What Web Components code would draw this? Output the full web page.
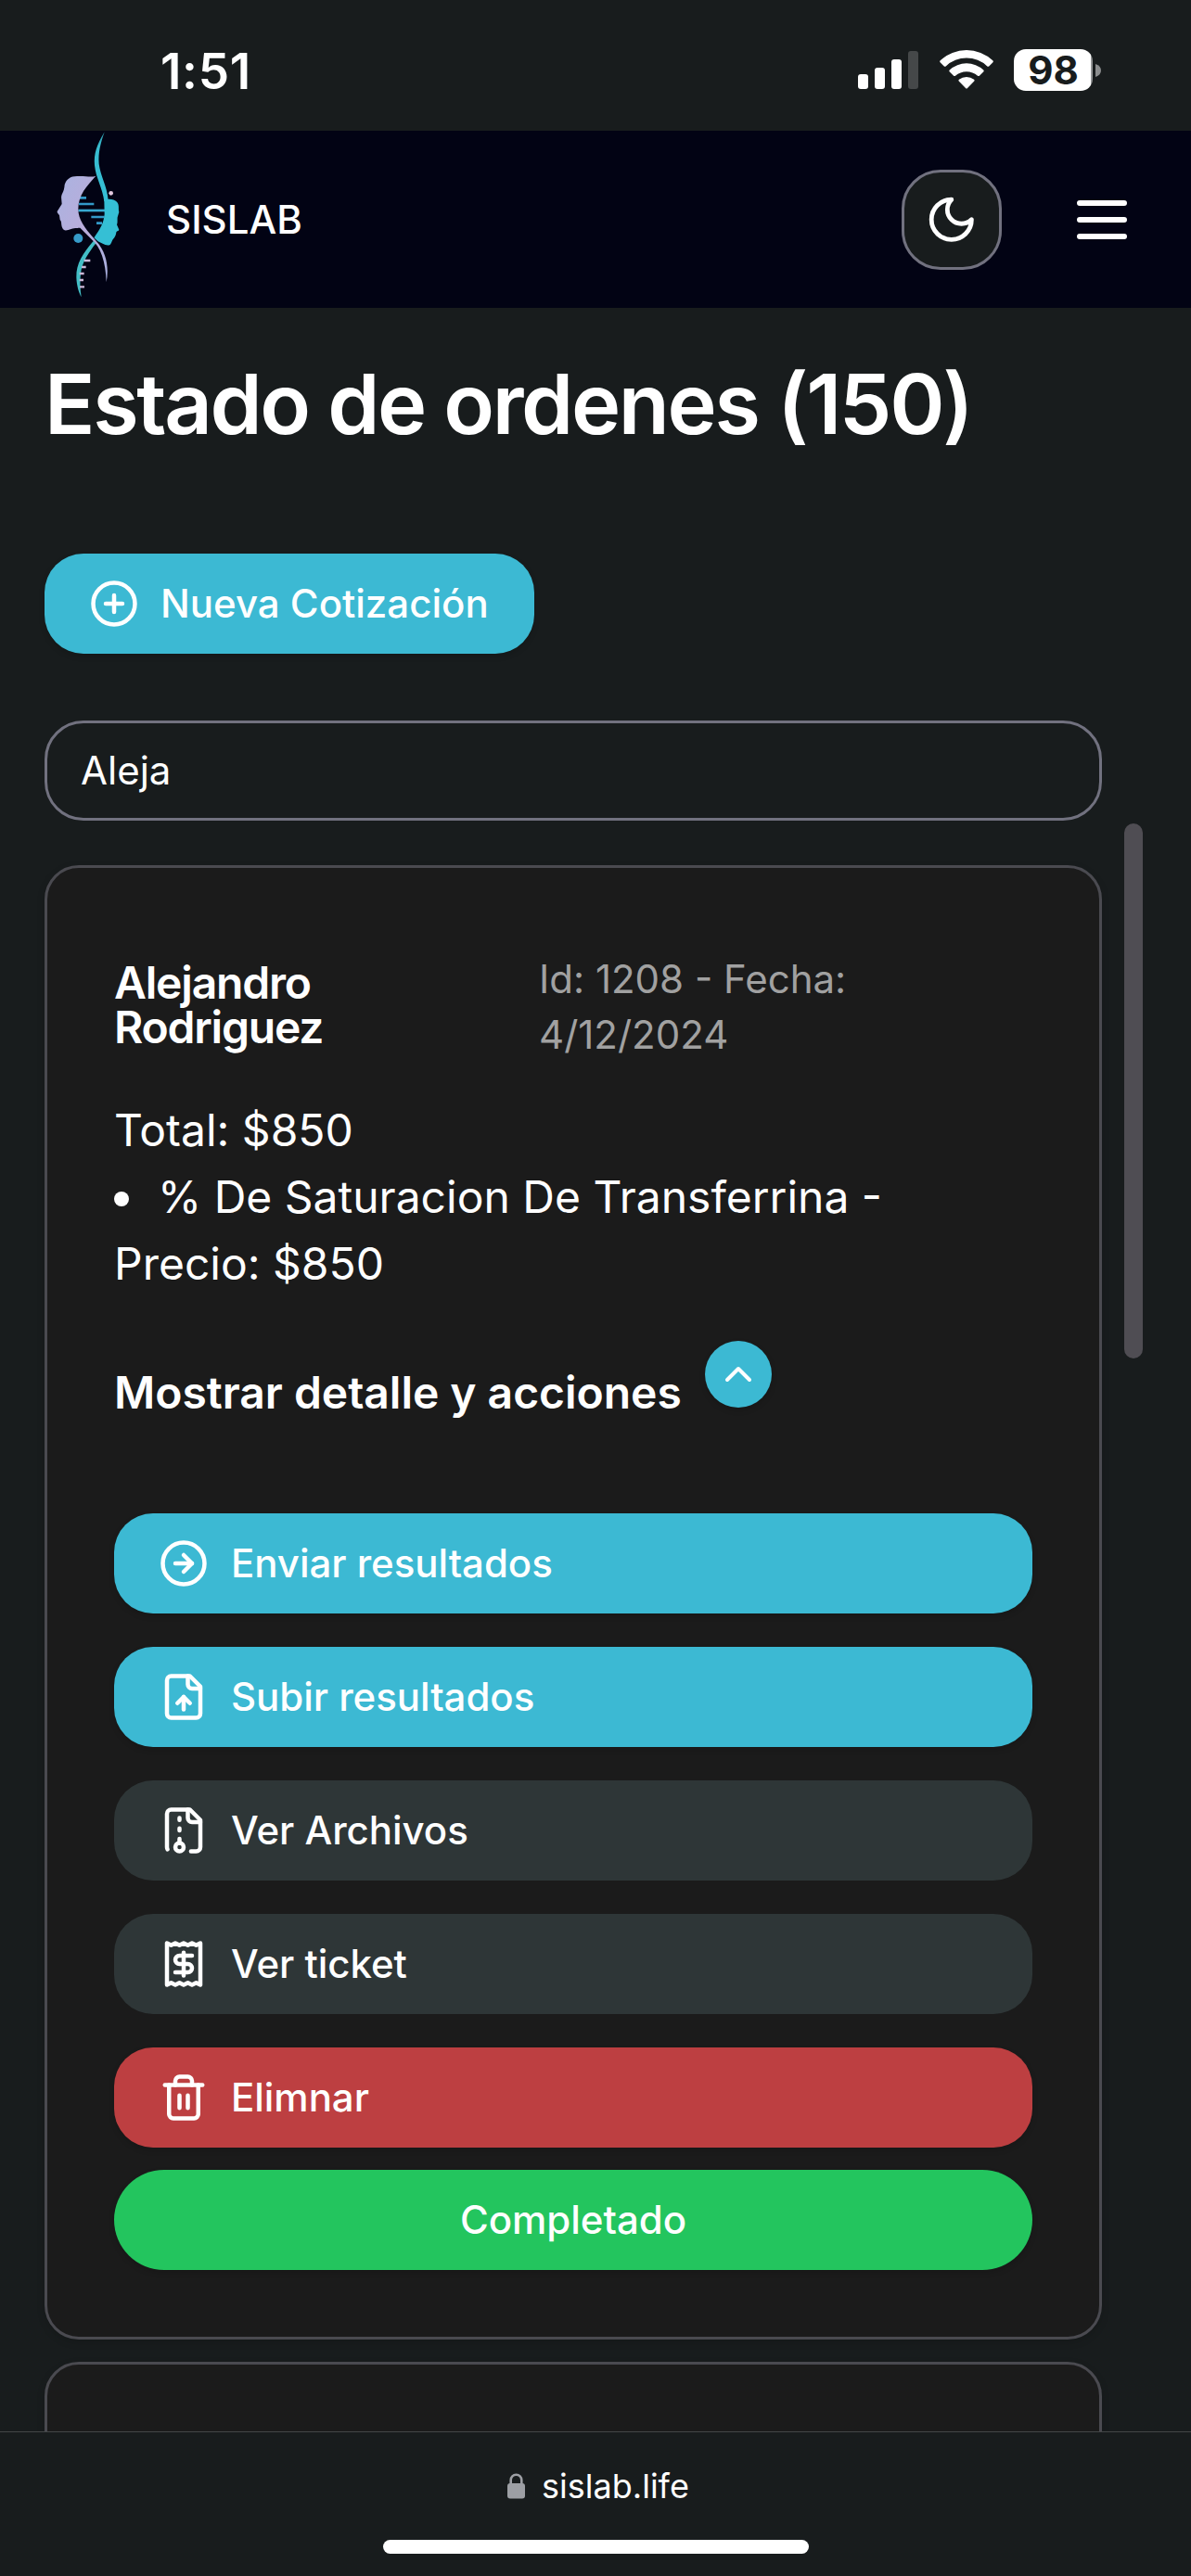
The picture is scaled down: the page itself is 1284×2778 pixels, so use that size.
<!DOCTYPE html>
<html lang="es">
<head>
<meta charset="utf-8">
<title>SISLAB</title>
<style>
html,body{margin:0;background:#181c1d}
body{width:1284px;height:2778px;overflow:hidden;font-family:Inter,"Liberation Sans",sans-serif;color:#fff}
</style>
</head>
<body>
<sis-screen>
  <sis-status slot="status"></sis-status>
  <sis-navbar slot="nav">SISLAB</sis-navbar>
  <sis-page slot="page">
    <span slot="title">Estado de ordenes (150)</span>
    <sis-button slot="new" icon="plus" compact>Nueva Cotización</sis-button>
    <sis-input slot="search" value="Aleja"></sis-input>
    <sis-card>
      <sis-order name="Alejandro Rodriguez" meta="Id: 1208 - Fecha: 4/12/2024" total="Total: $850" item="% De Saturacion De Transferrina - Precio: $850"></sis-order>
      <sis-button icon="send">Enviar resultados</sis-button>
      <sis-button icon="upload">Subir resultados</sis-button>
      <sis-button icon="archive" tone="muted">Ver Archivos</sis-button>
      <sis-button icon="receipt" tone="muted">Ver ticket</sis-button>
      <sis-button icon="trash" tone="danger">Elimnar</sis-button>
      <sis-button tone="done">Completado</sis-button>
    </sis-card>
    <sis-card></sis-card>
  </sis-page>
  <sis-urlbar slot="url">sislab.life</sis-urlbar>
</sis-screen>
<script>
const define=(name,render)=>customElements.define(name,class extends HTMLElement{
  constructor(){super();this.attachShadow({mode:'open'})}
  connectedCallback(){this.shadowRoot.innerHTML=render(this)}
});

const ICONS={
  plus:'<circle cx="12" cy="12" r="10"/><path d="M8 12h8M12 8v8"/>',
  send:'<circle cx="12" cy="12" r="10"/><path d="M8 12h8"/><path d="m12 16 4-4-4-4"/>',
  upload:'<path d="M15 2H6a2 2 0 0 0-2 2v16a2 2 0 0 0 2 2h12a2 2 0 0 0 2-2V7Z"/><path d="M14 2v4a2 2 0 0 0 2 2h4"/><path d="M12 12v6"/><path d="m15 15-3-3-3 3"/>',
  archive:'<path d="M10 12v-1M10 18v-2M10 7V6"/><path d="M14 2v4a2 2 0 0 0 2 2h4"/><path d="M15.5 22H18a2 2 0 0 0 2-2V7l-5-5H6a2 2 0 0 0-2 2v16a2 2 0 0 0 .274 1.01"/><circle cx="10" cy="20" r="2"/>',
  receipt:'<path d="M4 2v20l2-1 2 1 2-1 2 1 2-1 2 1 2-1 2 1V2l-2 1-2-1-2 1-2-1-2 1-2-1-2 1Z"/><path d="M16 8h-6a2 2 0 1 0 0 4h4a2 2 0 1 1 0 4H8"/><path d="M12 17.5v-11"/>',
  trash:'<path d="M3 6h18"/><path d="M19 6v14c0 1-1 2-2 2H7c-1 0-2-1-2-2V6"/><path d="M8 6V4c0-1 1-2 2-2h4c1 0 2 1 2 2v2"/><path d="M10 11v6M14 11v6"/>',
  moon:'<path d="M12 3a6 6 0 0 0 9 9 9 9 0 1 1-9-9Z"/>',
  menu:'<path d="M4 6h16M4 12h16M4 18h16"/>',
  up:'<path d="m18 15-6-6-6 6"/>'
};

define('sis-icon',el=>`
<style>:host{display:block;flex:none;width:var(--size,54px);height:var(--size,54px)}svg{display:block;width:100%;height:100%;fill:none;stroke:currentColor;stroke-width:2;stroke-linecap:round;stroke-linejoin:round}</style>
<svg viewBox="0 0 24 24">${ICONS[el.getAttribute('name')]||''}</svg>`);

define('sis-screen',()=>`
<style>:host{display:grid;width:1284px;height:2778px;grid-template-rows:141px 191px 2290px 156px}</style>
<slot name="status"></slot><slot name="nav"></slot><slot name="page"></slot><slot name="url"></slot>`);

define('sis-status',()=>`
<style>
:host{display:flex;justify-content:space-between;box-sizing:border-box;padding:53px 97px 0 172px}
.time{margin-left:1px;font-size:53px;font-weight:600;line-height:49px;letter-spacing:.7px}
.right{display:flex;height:45px}
svg{display:block}
.bat{display:flex;align-items:center;justify-content:center;width:85px;height:45px;margin-left:22px;border-radius:13px;background:linear-gradient(90deg,#fff 83px,#929495 83px);color:#181c1d;font-size:42px;font-weight:700;letter-spacing:0;line-height:45px}
</style>
<div class="time">1:51</div>
<div class="right">
<svg width="66" height="45" viewBox="0 0 66 45" fill="#fff"><rect y="27" width="11" height="16" rx="3"/><rect x="18" y="20" width="11" height="23" rx="3"/><rect x="36" y="11" width="11" height="32" rx="3"/><rect x="54" y="2" width="11" height="41" rx="3" fill="#454849"/></svg>
<svg width="58" height="45" viewBox="0 0 58 45" style="margin-left:22px" fill="#fff"><path d="M0.6 14.2Q-.3 13.2.7 12.2A41.3 41.3 0 0 1 57.300 12.200Q58.300 13.200 57.400 14.200L53.200 18.400Q52.300 19.300 51.300 18.400A32.500 32.500 0 0 0 6.700 18.400Q5.700 19.300 4.800 18.400Z"/><path d="M10.600 24.300Q9.800 23.400 10.700 22.500A27 27 0 0 1 47.300 22.500Q48.200 23.400 47.400 24.300L42.900 28.700Q42 29.500 41 28.700A18.200 18.200 0 0 0 17 28.700Q16 29.500 15.100 28.700Z"/><path d="M20.700 34.500Q19.900 33.600 20.900 32.800A12.800 12.800 0 0 1 37.100 32.800Q38.100 33.600 37.300 34.500L30 42Q29 43 28 42Z"/></svg>
<div class="bat">98</div>
<svg width="9" height="45" viewBox="0 0 9 45"><path d="M3 16Q9 18 9 23T3 30Z" fill="#8b8d8e"/></svg>
</div>`);

define('sis-logo',()=>`
<style>:host{display:block;width:110px;height:189px}svg{display:block}</style>
<svg width="110" height="189" viewBox="0 33 330 567">
<defs><linearGradient id="a" x1="0" y1="0" x2="0" y2="1"><stop offset="0" stop-color="#2c97a8"/><stop offset=".2" stop-color="#38bdd0"/><stop offset="1" stop-color="#35bfd5"/></linearGradient>
<linearGradient id="b" x1="0" y1="0" x2="1" y2="1"><stop offset="0" stop-color="#a9b3e0"/><stop offset=".5" stop-color="#b9addb"/><stop offset="1" stop-color="#a9b0df"/></linearGradient></defs>
<path d="M218 37C193 78 183 108 186 145C190 187 212 218 217 262L230 258C227 213 204 177 200 140C197 102 206 72 218 37Z" fill="url(#a)"/>
<g stroke="#3399c8" stroke-width="8"><path d="M138 250H159M135 270H184"/><path d="M133 291H222" stroke="#38a9d0"/><path d="M175 312H218M192 332H210"/></g>
<path d="M217 258C226 252 249 252 258 263C267 273 262 284 265 296L260 313C259 323 261 331 258 337L265 353C264 358 257 356 256 362C255 371 251 379 245 385C241 391 240 401 234 403C220 406 208 395 197 391L184 379C203 353 216 331 218 303Z" fill="#35bfd5"/>
<path d="M184 388C148 430 126 463 127 507C128 535 135 557 143 571C139 545 138 520 141 496C144 459 169 424 191 396Z" fill="#43bec6"/>
<path d="M190 179C174 185 154 178 129 180C108 180 94 190 89 208C88 219 87 226 80 239C76 249 80 259 80 270L65 294C64 300 71 302 72 307L74 321C81 328 76 335 82 348C86 358 96 356 110 351C124 346 132 348 139 347L176 384C205 409 222 455 224 523C233 475 224 426 193 392C163 358 133 324 133 288C132 242 161 211 190 179Z" fill="url(#b)"/>
<circle cx="133" cy="381" r="15" fill="#369bc9"/><circle cx="239" cy="235" r="7" fill="#e2c9df"/>
<path d="M152 453H172M144 474H158M137 495H152M137 516H150M138 538H153" stroke="#cbb9d8" stroke-width="7"/>
</svg>`);

define('sis-navbar',()=>`
<style>
:host{display:flex;align-items:center;background:#020314}
.brand{margin-left:29px;font-size:42px;font-weight:500;line-height:60px}
.theme{display:flex;align-items:center;justify-content:center;box-sizing:border-box;width:108px;height:108px;margin-left:auto;border:3px solid #71717f;border-radius:42px;background:#181c1d;--size:57.6px}
.menu{--size:72px;margin:0 60px 0 72px}
sis-logo{align-self:flex-start;margin-left:40px}
</style>
<sis-logo></sis-logo><div class="brand"><slot></slot></div>
<div class="theme"><sis-icon name="moon"></sis-icon></div>
<sis-icon class="menu" name="menu"></sis-icon>`);

define('sis-page',()=>`
<style>
:host{display:flex;align-items:flex-start;overflow:hidden;height:2290px;background:#181c1d}
.col{display:flex;flex-direction:column;width:1140px;margin-left:48px;padding-top:50px}
h1{margin:0 0 107px;font-size:90px;line-height:108px;font-weight:600;letter-spacing:-2.33px;white-space:nowrap}
.new{align-self:flex-start}
.search{margin:72px 0 48px}
.cards{display:flex;flex-direction:column;gap:24px}
.thumb{width:20px;height:577px;margin:556px 0 0 24px;border-radius:10px;background:#4f4d53}
</style>
<div class="col"><h1><slot name="title"></slot></h1>
<div class="new"><slot name="new"></slot></div>
<div class="search"><slot name="search"></slot></div>
<div class="cards"><slot></slot></div></div>
<div class="thumb"></div>`);

define('sis-input',el=>`
<style>:host{display:block}div{box-sizing:border-box;height:108px;border:3px solid #71717f;border-radius:42px;padding:0 36px;font-size:42px;line-height:102px}</style>
<div>${el.getAttribute('value')}</div>`);

define('sis-card',()=>`
<style>:host{display:flex;flex-direction:column;gap:36px;box-sizing:border-box;min-height:300px;padding:72px;border:3px solid #4a4a50;border-radius:37px;background:#1b1b1b;box-shadow:0 3px 9px rgba(0,0,0,.15)}
::slotted([tone="done"]){margin-top:-12px}</style>
<slot></slot>`);

define('sis-order',el=>`
<style>
:host{display:block;margin-bottom:58px;padding-top:18px}
.head{display:grid;grid-template-columns:458px 380px}
h3{margin:0;padding-top:10px;width:300px;font-size:48px;line-height:48px;font-weight:600;letter-spacing:-1.2px}
.meta{font-size:42px;line-height:60px;color:#a1a1a1}
.body{margin-top:37px;font-size:48px;line-height:72px}
.dot{display:inline-block;width:16px;height:16px;border-radius:50%;background:#fff;vertical-align:7px;margin-right:31px}
.more{display:flex;align-items:flex-start;margin-top:47px;font-size:48px;line-height:72px;font-weight:600}
.more p{margin:20px 0 0;width:637px;white-space:nowrap;letter-spacing:-.03px}
.toggle{display:flex;align-items:center;justify-content:center;width:72px;height:72px;border-radius:50%;background:#3cb9d3;--size:48px;box-shadow:0 3px 6px rgba(0,0,0,.15)}
.item{width:900px}
</style>
<div class="head"><h3>${el.getAttribute('name')}</h3><div class="meta">${el.getAttribute('meta')}</div></div>
<div class="body"><div>${el.getAttribute('total')}</div><div class="item"><span class="dot"></span>${el.getAttribute('item')}</div></div>
<div class="more"><p>Mostrar detalle y acciones</p><div class="toggle"><sis-icon name="up"></sis-icon></div></div>`);

define('sis-button',el=>`
<style>
:host{display:flex;align-items:center;box-sizing:border-box;height:108px;padding:0 48px;gap:24px;border-radius:42px;background:#3cb9d3;color:#fff;font-size:42px;font-weight:500;line-height:60px;letter-spacing:-.04px;white-space:nowrap;box-shadow:0 3px 6px rgba(0,0,0,.15)}
:host([compact]){width:528px;gap:23px;letter-spacing:0}
:host([tone="muted"]){background:#2e3637;box-shadow:none}
:host([tone="danger"]){background:#bd3f41}
:host([tone="done"]){background:#23c55e;border-radius:54px;justify-content:center}
</style>
${el.hasAttribute('icon')?`<sis-icon name="${el.getAttribute('icon')}"></sis-icon>`:''}<span><slot></slot></span>`);

define('sis-urlbar',()=>`
<style>
:host{display:flex;flex-direction:column;align-items:center;box-sizing:border-box;border-top:1px solid #434647;background:#181c1d}
.url{display:flex;align-items:center;gap:18px;height:48px;margin:34px 0 0 6px;font-size:36px;line-height:48px}
.home{width:459px;height:15px;margin-top:34px;border-radius:8px;background:#fff}
svg{display:block}
</style>
<div class="url"><svg width="19" height="28" viewBox="0 0 19 28"><rect y="11" width="19" height="16.500" rx="3" fill="#9d9fa4"/><path d="M3.700 12V7.500a5.800 5.800 0 0 1 11.600 0V12" fill="none" stroke="#9d9fa4" stroke-width="2.600"/></svg><span><slot></slot></span></div>
<div class="home"></div>`);
</script>
</body>
</html>
